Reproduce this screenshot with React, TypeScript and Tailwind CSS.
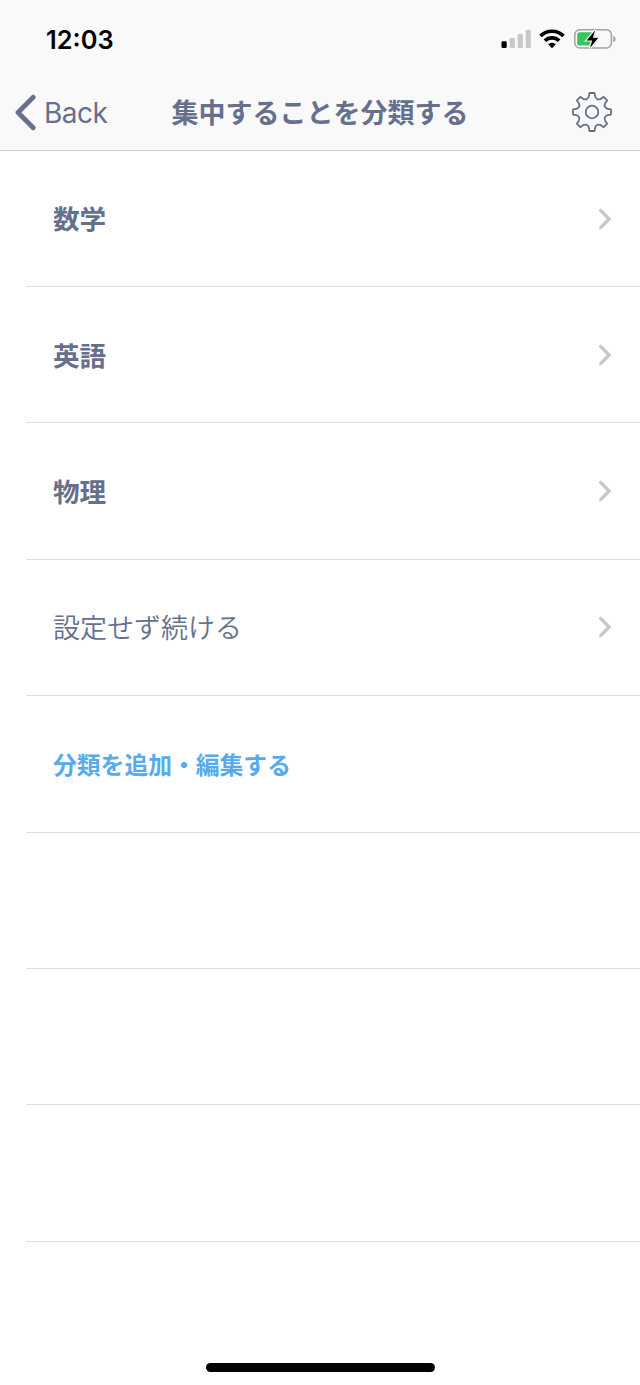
const TEETH = 8;

type Row = { label: string; style: string; chevron: boolean };

const rows: Row[] = [
  { label: "数学", style: "pb-px text-[26.6px] font-bold text-[#66708d]", chevron: true },
  { label: "英語", style: "text-[26.6px] font-bold text-[#66708d]", chevron: true },
  { label: "物理", style: "text-[26.6px] font-bold text-[#66708d]", chevron: true },
  { label: "設定せず続ける", style: "text-[27px] font-[350] text-[#66708d]", chevron: true },
  { label: "分類を追加・編集する", style: "pb-px text-[23.8px] font-bold text-[#57aaeb]", chevron: false },
  { label: "", style: "", chevron: false },
  { label: "", style: "", chevron: false },
  { label: "", style: "", chevron: false },
];

/* One closed outline: the same tooth turned around the centre */
function gearPath() {
  const at = (x: number, y: number, i: number) => {
    const a = (i * 2 * Math.PI) / TEETH;
    const px = x * Math.cos(a) - y * Math.sin(a);
    const py = x * Math.sin(a) + y * Math.cos(a);
    return `${px.toFixed(2)} ${py.toFixed(2)}`;
  };
  let d = `M${at(-3.1, -15.8, 0)}`;
  for (let i = 0; i < TEETH; i++) {
    d += `L${at(-2.5, -19, i)}L${at(2.5, -19, i)}L${at(3.1, -15.8, i)}`;
    d += `C${at(3.6, -12.9, i)} ${at(-3.6, -12.9, i + 1)} ${at(-3.1, -15.8, i + 1)}`;
  }
  return d + "Z";
}

function GearIcon() {
  return (
    <svg width="42" height="42" viewBox="-21 -21 42 42" fill="none" stroke="#66708d" strokeWidth="1.8" strokeLinejoin="round">
      <path d={gearPath()} />
      <circle r="6.3" />
    </svg>
  );
}

function SignalIcon() {
  return (
    <svg width="30" height="20" viewBox="0 0 30 20">
      <rect x="0.5" y="12.2" width="5.2" height="6.8" rx="1.3" fill="#000" />
      <rect x="8.7" y="8.9" width="5.2" height="10.1" rx="1.3" fill="#c8c8c8" />
      <rect x="16.7" y="5" width="5.2" height="14" rx="1.3" fill="#c8c8c8" />
      <rect x="24.7" y="1" width="5.2" height="18" rx="1.3" fill="#c8c8c8" />
    </svg>
  );
}

function WifiIcon() {
  return (
    <svg width="26" height="20" viewBox="0 0 26 20" fill="none" stroke="#000" strokeWidth="3.6">
      <path d="M1.5 7a16.3 16.3 0 0 1 23 0" />
      <path d="M5.9 11.8a10 10 0 0 1 14.2 0" />
      <path d="M13 19.2l-3.9-3.9a5.5 5.5 0 0 1 7.8 0z" fill="#000" stroke="none" />
    </svg>
  );
}

function BatteryIcon() {
  return (
    <svg width="43" height="22" viewBox="0 0 43 22">
      <rect x="0.8" y="1.8" width="36.6" height="18.2" rx="5" fill="none" stroke="#a2a2a2" strokeWidth="1.5" />
      <path d="M39.3 7.7c3 1.1 3 5.5 0 6.6z" fill="#a2a2a2" />
      <rect x="3.2" y="4.2" width="18" height="13.4" rx="2.7" fill="#35c759" />
      <path d="M21.2 2.2L12.6 12.4h5.6l-2.3 7.6L24.4 9.8h-5.6z" fill="#000" stroke="#f9f9f9" strokeWidth="2.4" paintOrder="stroke" />
    </svg>
  );
}

function StatusBar() {
  return (
    <div className="flex h-[75px] items-start justify-between pt-[24px] pr-[23px] pl-[46px]">
      <span className="font-['Inter','Liberation_Sans',sans-serif] text-[25.4px] leading-8 font-semibold text-black">12:03</span>
      <div className="flex items-start pt-[5px]">
        <SignalIcon />
        <div className="ml-2">
          <WifiIcon />
        </div>
        <div className="-mt-px ml-[9px]">
          <BatteryIcon />
        </div>
      </div>
    </div>
  );
}

function NavBar() {
  return (
    <div className="grid h-[74px] grid-cols-[160px_1fr_160px] items-center text-[#66708d]">
      <div className="flex items-center pl-[14px]">
        <svg width="24" height="38" viewBox="0 0 24 38" fill="none" stroke="#66708d" strokeWidth="4.8" strokeLinecap="round" strokeLinejoin="round">
          <path d="M19.2 4.3L4 19.5l15.2 15.2" />
        </svg>
        <span className="ml-[6px] pt-px font-['Inter','Liberation_Sans',sans-serif] text-[28px] leading-9 font-normal tracking-[-0.5px]">Back</span>
      </div>
      <h1 className="text-center text-[27px] leading-9 font-bold whitespace-nowrap">集中することを分類する</h1>
      <div className="flex justify-end pr-[27px]">
        <GearIcon />
      </div>
    </div>
  );
}

function ListRow({ row }: { row: Row }) {
  return (
    <li className="ml-[26px] flex h-[136.4px] items-center justify-between border-b border-[#dedee0] pr-[27px] pl-[27px] first:h-[136px]">
      <span className={row.style}>{row.label}</span>
      {row.chevron && (
        <svg width="16" height="24" viewBox="0 0 16 24" fill="none" stroke="#c6c6ca" strokeWidth="3.3" strokeLinecap="round" strokeLinejoin="round">
          <path d="M3.6 3.4L12.2 12l-8.6 8.6" />
        </svg>
      )}
    </li>
  );
}

export default function App() {
  return (
    <div className="flex h-[1385px] w-[640px] flex-col overflow-hidden bg-white font-['Noto_Sans_CJK_JP',sans-serif]">
      <header className="h-[151px] shrink-0 border-b border-[#cfcfd0] bg-[#f9f9f9]">
        <StatusBar />
        <NavBar />
      </header>
      <ul className="grow">
        {rows.map((row, i) => (
          <ListRow key={i} row={row} />
        ))}
      </ul>
      <div className="mx-auto mb-[13px] h-[9px] w-[229px] shrink-0 rounded-full bg-black" />
    </div>
  );
}
